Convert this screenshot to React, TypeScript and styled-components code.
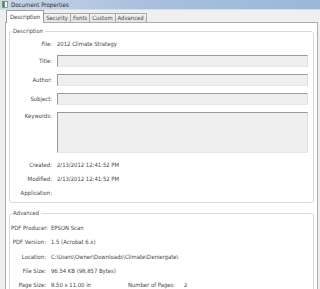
import React from 'react'
import styled, { createGlobalStyle } from 'styled-components'

const GlobalStyle = createGlobalStyle`
  html, body {
    margin: 0;
    padding: 0;
    background: #efefef;
  }
  body {
    font-family: "DejaVu Sans Condensed", "Liberation Sans", sans-serif;
  }
  * { box-sizing: border-box; }
`

const Window = styled.div`
  width: 320px;
  height: 289px;
  overflow: hidden;
  display: flex;
  flex-direction: column;
  background: #efefef;
  color: #474747;
  font-size: 5.9px;
  line-height: 9px;
`

const TitleBar = styled.div`
  height: 12px;
  display: flex;
  align-items: center;
  gap: 3px;
  padding-left: 2px;
  background: linear-gradient(to right, #c8d6e7, #a8c0de 45%, #9bb7d9);
  border-bottom: 1px solid #d4dfec;
  color: #2e2e2e;
  font-size: 6.1px;
`

const TabStrip = styled.div`
  height: 12px;
  display: flex;
  align-items: flex-end;
  padding-left: 6px;
  position: relative;
  z-index: 1;
`

const Tab = styled.div<{ $active?: boolean }>`
  height: ${p => (p.$active ? 13 : 9)}px;
  margin-bottom: ${p => (p.$active ? -1 : 0)}px;
  padding: 0 ${p => (p.$active ? 3 : 2)}px;
  display: flex;
  align-items: center;
  background: ${p => (p.$active ? '#ffffff' : 'linear-gradient(#f3f3f3, #e2e2e2)')};
  border: 1px solid ${p => (p.$active ? '#9c9c9c' : '#a8a8a8')};
  border-bottom: none;
  border-left-width: ${p => (p.$active ? 1 : 0)}px;
  color: ${p => (p.$active ? '#3a3a3a' : '#4a4a4a')};
  white-space: nowrap;
`

const Panel = styled.div`
  flex: 1;
  margin: 0 2px 0 5px;
  background: #ffffff;
  border: 1px solid #adadad;
  border-bottom: none;
  padding: 8px 3px 0 3px;
  display: flex;
  flex-direction: column;
`

const Group = styled.div<{ $gap?: number; $top: number; $labelWidth: number }>`
  position: relative;
  margin-top: ${p => p.$gap ?? 0}px;
  border: 1px solid #dadada;
  border-radius: 3px;
  padding: ${p => p.$top}px 5px 2px 1px;
  display: flex;
  flex-direction: column;
  --label-width: ${p => p.$labelWidth}px;
`

const Legend = styled.div`
  position: absolute;
  top: -5px;
  left: 2px;
  padding: 0 2px 0 1px;
  background: #ffffff;
  color: #4f4f4f;
`

const Row = styled.div<{ $height?: number; $gap?: number; $top?: boolean }>`
  display: grid;
  grid-template-columns: var(--label-width) 1fr;
  column-gap: 5px;
  align-items: ${p => (p.$top ? 'start' : 'center')};
  height: ${p => p.$height ?? 14}px;
  margin-top: ${p => p.$gap ?? 0}px;
`

const Label = styled.div<{ $pad?: number }>`
  text-align: right;
  white-space: nowrap;
  padding-top: ${p => p.$pad ?? 0}px;
`

const Value = styled.div`
  white-space: nowrap;
  display: flex;
  align-items: center;
`

const Field = styled.div<{ $tall?: boolean }>`
  height: ${p => (p.$tall ? 41 : 12)}px;
  background: #efefef;
  border-top: 1px solid #9a9a9a;
  border-left: 1px solid #9a9a9a;
  border-right: 1px solid #dedede;
  border-bottom: 1px solid #e8e8e8;
`

const Slot = styled.span<{ $width: number }>`
  display: inline-block;
  width: ${p => p.$width}px;
`

const AppIcon = () => (
  <svg width="6" height="7" viewBox="0 0 6 7">
    <rect x="0.5" y="0.5" width="5" height="6" fill="#f4f6f4" stroke="#5b6b5b" strokeWidth="0.6" />
    <rect x="0.8" y="0.8" width="2" height="5.4" fill="#3c8a3c" />
  </svg>
)

const tabs = ['Description', 'Security', 'Fonts', 'Custom', 'Advanced']

export default function App() {
  return (
    <Window>
      <GlobalStyle />
      <TitleBar>
        <AppIcon />
        <span>Document Properties</span>
      </TitleBar>
      <TabStrip>
        {tabs.map((t, i) => (
          <Tab key={t} $active={i === 0}>{t}</Tab>
        ))}
      </TabStrip>
      <Panel>
        <Group $top={5} $labelWidth={41}>
          <Legend>Description</Legend>
          <Row>
            <Label>File:</Label>
            <Value>2012 Climate Strategy</Value>
          </Row>
          <Row $height={12} $gap={4}>
            <Label>Title:</Label>
            <Field />
          </Row>
          <Row $height={12} $gap={7}>
            <Label>Author:</Label>
            <Field />
          </Row>
          <Row $height={12} $gap={7}>
            <Label>Subject:</Label>
            <Field />
          </Row>
          <Row $height={41} $gap={7} $top>
            <Label $pad={0}>Keywords:</Label>
            <Field $tall />
          </Row>
          <Row $gap={5}>
            <Label>Created:</Label>
            <Value>2/13/2012 12:41:52 PM</Value>
          </Row>
          <Row>
            <Label>Modified:</Label>
            <Value>2/13/2012 12:41:52 PM</Value>
          </Row>
          <Row>
            <Label>Application:</Label>
            <Value />
          </Row>
        </Group>
        <Group $gap={10} $top={7} $labelWidth={35}>
          <Legend>Advanced</Legend>
          <Row>
            <Label>PDF Producer:</Label>
            <Value>EPSON Scan</Value>
          </Row>
          <Row>
            <Label>PDF Version:</Label>
            <Value>1.5 (Acrobat 6.x)</Value>
          </Row>
          <Row $gap={1}>
            <Label>Location:</Label>
            <Value>C:\Users\Owner\Downloads\Climate\Deniergate\</Value>
          </Row>
          <Row>
            <Label>File Size:</Label>
            <Value>96.54 KB (98,857 Bytes)</Value>
          </Row>
          <Row>
            <Label>Page Size:</Label>
            <Value>
              <Slot $width={77}>8.50 x 11.00 in</Slot>
              <Slot $width={56}>Number of Pages:</Slot>
              <span>2</span>
            </Value>
          </Row>
        </Group>
      </Panel>
    </Window>
  )
}
